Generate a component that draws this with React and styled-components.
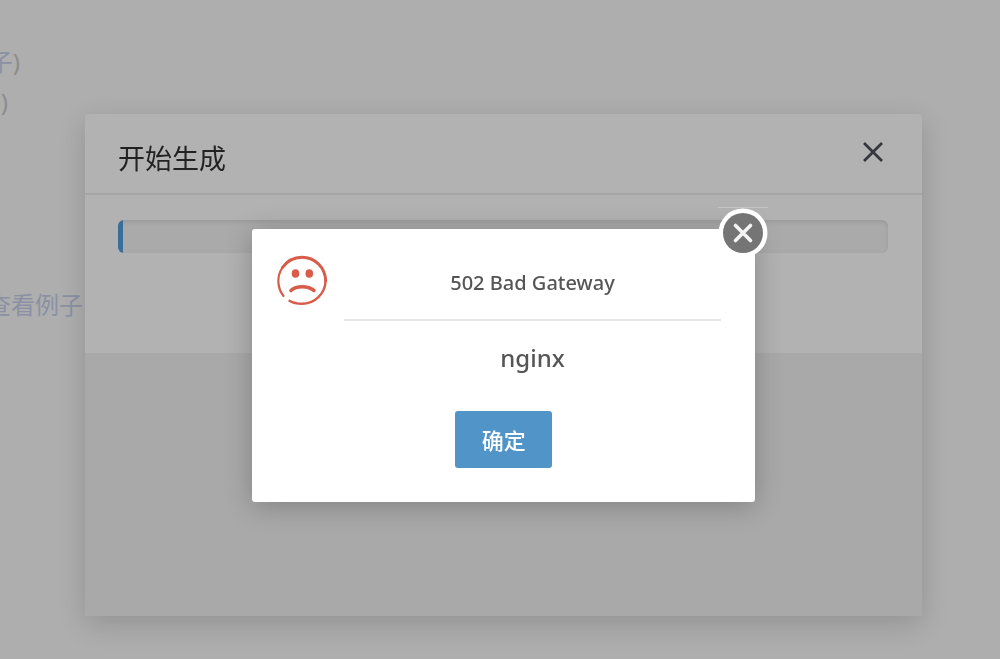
import React, {Fragment} from 'react'

import styled, {createGlobalStyle} from 'styled-components';

const GlobalStyle = createGlobalStyle`
    * {
        box-sizing: border-box;
    }
    body {
        margin: 0;
        background: #aeaeae;
        color: #222;
        font-family: "Noto Sans", "Noto Sans CJK SC", sans-serif;
        overflow: hidden;
    }
    button {
        font-family: inherit;
        border: 0;
        padding: 0;
        cursor: pointer;
    }
`

const Page = styled.main`
    min-height: 100vh;
    padding-top: 42px;
    font-size: 24px;
    line-height: 40px;
    color: #8c8c8c;
`

const Hint = styled.p`
    display: flex;
    justify-content: flex-end;
    width: ${props => props.$width};
    margin: 0 0 ${props => props.$gap || '0'};
    white-space: nowrap;
`

const HintLink = styled.a`
    color: #8b91a3;
    text-decoration: none;
`

const Layer = styled.div`
    position: fixed;
    inset: 0;
    display: flex;
    align-items: flex-start;
    justify-content: center;
    padding: ${props => props.$top} 0 0 7px;
`

const Panel = styled.section`
    width: 84.3%;
    border-radius: 4px;
    background: #b2b2b2;
    box-shadow: 0 8px 28px rgba(0, 0, 0, 0.16);
`

const PanelHeader = styled.header`
    display: flex;
    align-items: center;
    justify-content: space-between;
    padding: 25px 36px 14px 33px;
    border-bottom: 2px solid #a5a5a5;
`

const PanelTitle = styled.h2`
    margin: 0;
    font-size: 27px;
    line-height: 40px;
    font-weight: 400;
`

const PanelClose = styled.button`
    display: flex;
    align-self: flex-start;
    background: transparent;
`

const PanelBody = styled.div`
    padding: 25px 34px 100px 33px;
`

const Track = styled.div`
    height: 33px;
    border-radius: 6px;
    overflow: hidden;
    background: #aaa;
    box-shadow: inset 0 2px 4px rgba(0, 0, 0, 0.1);
`

const Bar = styled.div`
    width: 5px;
    height: 100%;
    background: #396d9a;
`

const PanelFooter = styled.footer`
    height: 263px;
    background: #a9a9a9;
`

const Dialog = styled.div`
    position: relative;
    display: flex;
    width: 50.6%;
    padding: 25px 34px 34px 24px;
    border-radius: 3px;
    background: #fff;
    color: #555;
    box-shadow: 0 4px 28px rgba(0, 0, 0, 0.24);
`

const Message = styled.div`
    flex: 1;
    margin-left: 16px;
    text-align: center;
`

const Heading = styled.h1`
    margin: 0;
    padding: 13px 0 20px;
    border-bottom: 2px solid #e6e6e6;
    font-size: 20px;
    line-height: 32px;
    font-weight: 500;
`

const Server = styled.p`
    margin: 0;
    padding: 19px 0 35px;
    font-size: 24px;
    line-height: 36px;
    font-weight: 500;
`

const Confirm = styled.button`
    display: block;
    width: 97px;
    height: 57px;
    margin: 0 auto 0 111px;
    padding-bottom: 2px;
    border-radius: 3px;
    background: #5195c8;
    color: #fff;
    font-size: 22px;
    font-weight: 500;
`

const DialogClose = styled.button`
    position: absolute;
    top: -22px;
    right: -13px;
    display: flex;
    border-top: 1px solid #c4c4c4;
    background: transparent;
`

const SadFace = () => (
    <svg width="52" height="52" viewBox="0 0 52 52" fill="none" stroke="#d95b4a" strokeLinecap="round" aria-hidden="true">
        <path d="M7.500 42A24.200 24.200 0 0 1 6.500 13.500" strokeWidth="2.200" />
        <path d="M6.500 13.500A24 24 0 0 1 26 3.200A23.600 23.600 0 0 1 49.600 27" strokeWidth="3" />
        <path d="M49.600 27A23.600 23.600 0 0 1 26 49.800Q18.500 49.800 13.500 46.800" strokeWidth="2.400" />
        <path d="M15 36.500C20.500 31.500 31.500 31.500 38 36.500" strokeWidth="3.600" />
        <ellipse cx="19.500" cy="19.500" rx="3.800" ry="4.300" fill="#d95b4a" stroke="none" />
        <ellipse cx="33.300" cy="19.500" rx="3.800" ry="4.300" fill="#d95b4a" stroke="none" />
    </svg>
)

const App = () => {

    return (
        <Fragment>
            <GlobalStyle />
            <Page>
                <Hint $width="20px"><HintLink href="#example">(查看例子</HintLink>)</Hint>
                <Hint $width="8px" $gap="163px"><HintLink href="#example">(查看例子</HintLink>)</Hint>
                <Hint $width="83px"><HintLink href="#example">查看例子</HintLink></Hint>
            </Page>
            <Layer $top="114px">
                <Panel>
                    <PanelHeader>
                        <PanelTitle>开始生成</PanelTitle>
                        <PanelClose type="button" aria-label="关闭">
                            <svg width="26" height="26" viewBox="0 0 26 26" stroke="#363640" strokeWidth="2.800">
                                <path d="M4 4L22 22M22 4L4 22" />
                            </svg>
                        </PanelClose>
                    </PanelHeader>
                    <PanelBody>
                        <Track role="progressbar" aria-label="开始生成">
                            <Bar />
                        </Track>
                    </PanelBody>
                    <PanelFooter />
                </Panel>
            </Layer>
            <Layer $top="229px">
                <Dialog role="alertdialog" aria-label="502 Bad Gateway">
                    <SadFace />
                    <Message>
                        <Heading>502 Bad Gateway</Heading>
                        <Server>nginx</Server>
                        <Confirm type="button">确定</Confirm>
                    </Message>
                    <DialogClose type="button" aria-label="关闭">
                        <svg width="50" height="50" viewBox="0 0 50 50">
                            <circle cx="25" cy="25" r="24.500" fill="#fff" />
                            <circle cx="25" cy="25" r="20" fill="#757575" />
                            <path d="M17.500 17.500L32.500 32.500M32.500 17.500L17.500 32.500" stroke="#f4f4f4" strokeWidth="3.600" strokeLinecap="round" />
                        </svg>
                    </DialogClose>
                </Dialog>
            </Layer>
        </Fragment>
    )
}

export default App
